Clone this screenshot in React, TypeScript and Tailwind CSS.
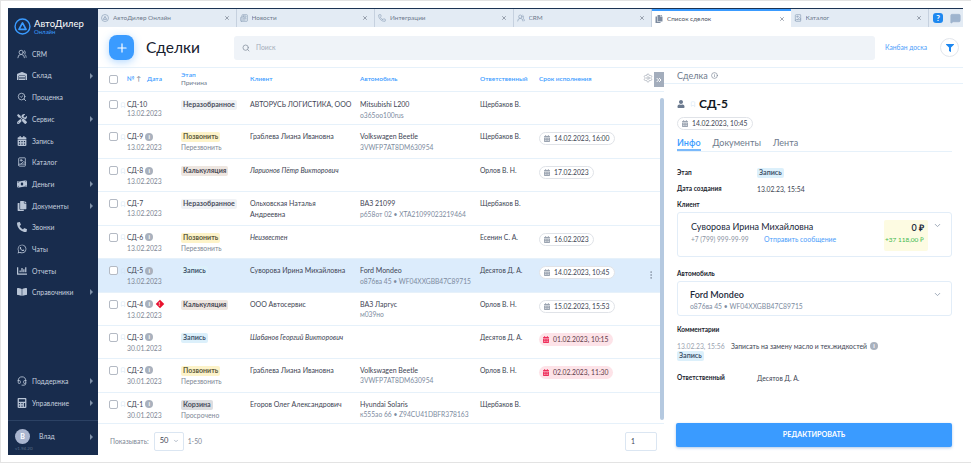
import React from "react";
import { Search, X, ChevronDown, ChevronsRight, EllipsisVertical, Bookmark, Info, Plus, Phone, Newspaper, SearchCheck, BookImage, Headset, UsersRound, MessageSquareMore, Settings } from "lucide-react";
import { FaWhatsapp, FaWarehouse, FaTools, FaCalendarAlt, FaMoneyBillWave, FaCopy, FaPhoneAlt, FaChartBar, FaBookOpen, FaCalculator, FaUser, FaFilter } from "react-icons/fa";

type Tag = "n" | "p" | "k" | "z" | "c";
const tagCls: Record<Tag, string> = {
  n: "bg-[#f0f2f5] text-[#4b5060]",
  p: "bg-[#fdf3c9] text-[#5c5a3a]",
  k: "bg-[#eee6e0] text-[#4a4a55]",
  z: "bg-[#dcf0fb] text-[#44566e]",
  c: "bg-[#dcdde1] text-[#4b5060]",
};
const tagText: Record<Tag, string> = { n: "Неразобранное", p: "Позвонить", k: "Калькуляция", z: "Запись", c: "Корзина" };

function Pill({ t }: { t: Tag }) {
  return <span className={`block w-fit rounded-[2px] px-[2px] h-[10px] leading-[10px] text-[7.1px] font-bold ${tagCls[t]}`}>{tagText[t]}</span>;
}

function I() {
  return <span className="inline-flex items-center justify-center w-[8px] h-[8px] rounded-full bg-[#a9b1bd] text-white text-[6px] font-bold leading-none shrink-0">i</span>;
}

function Box() {
  return <span className="block w-[9px] h-[9px] rounded-[2px] border border-[#b4bac4] bg-white shrink-0" />;
}

type R = {
  id: string; date: string; info?: boolean; alert?: boolean; tag: Tag; reason?: string; client: string; client2?: string; italic?: boolean;
  car?: string; sub?: string; resp: string; due?: string; red?: boolean; active?: boolean; h: string; first?: boolean;
};

const rows: R[] = [
  { id: "СД-10", date: "13.02.2023", tag: "n", client: "АВТОРУСЬ ЛОГИСТИКА, ООО", car: "Mitsubishi L200", sub: "о365оо100rus", resp: "Щербаков В.", h: "h-[33.5px]", first: true },
  { id: "СД-9", date: "13.02.2023", info: true, tag: "p", reason: "Перезвонить", client: "Граблева Лиана Ивановна", car: "Volkswagen Beetle", sub: "3VWFP7AT8DM630954", resp: "Щербаков В.", due: "14.02.2023, 16:00", h: "h-[34px]" },
  { id: "СД-8", date: "13.02.2023", info: true, tag: "k", client: "Ларионов Пётр Викторович", italic: true, resp: "Орлов В. Н.", due: "17.02.2023", h: "h-[33px]" },
  { id: "СД-7", date: "13.02.2023", tag: "n", client: "Ольховская Наталья", client2: "Андреевна", car: "ВАЗ 21099", sub: "р658от 02 • XTA21099023219464", resp: "Щербаков В.", h: "h-[33.5px]" },
  { id: "СД-6", date: "13.02.2023", info: true, tag: "p", reason: "Перезвонить", client: "Неизвестен", italic: true, resp: "Есенин С. А.", due: "16.02.2023", h: "h-[33.5px]" },
  { id: "СД-5", date: "13.02.2023", info: true, tag: "z", client: "Суворова Ирина Михайловна", car: "Ford Mondeo", sub: "о876ва 45 • WF04XXGBB47C89715", resp: "Десятов Д. А.", due: "14.02.2023, 10:45", active: true, h: "h-[33.5px]" },
  { id: "СД-4", date: "13.02.2023", info: true, alert: true, tag: "k", client: "ООО Автосервис", car: "ВАЗ Ларгус", sub: "м039но", resp: "Орлов В. Н.", due: "15.02.2023, 15:53", h: "h-[33px]" },
  { id: "СД-3", date: "30.01.2023", info: true, tag: "z", client: "Шабанов Георгий Викторович", italic: true, resp: "Десятов Д. А.", due: "01.02.2023, 10:15", red: true, h: "h-[33px]" },
  { id: "СД-2", date: "30.01.2023", info: true, tag: "p", reason: "Перезвонить", client: "Граблева Лиана Ивановна", car: "Volkswagen Beetle", sub: "3VWFP7AT8DM630954", resp: "Орлов В. Н.", due: "02.02.2023, 11:30", red: true, h: "h-[34px]" },
  { id: "СД-1", date: "30.01.2023", info: true, tag: "c", reason: "Просрочено", client: "Егоров Олег Александрович", car: "Hyundai Solaris", sub: "к555ао 66 • Z94CU41DBFR378163", resp: "Щербаков В.", h: "h-[31px]" },
];

function Due({ text, red }: { text: string; red?: boolean }) {
  return (
    <span className={`flex w-fit items-center gap-[4px] h-[13px] px-[4px] rounded-full text-[6.8px] whitespace-nowrap ${red ? "bg-[#fde3e8] text-[#5d3a48]" : "border border-[#e0e3e8] text-[#3d4453] bg-white"}`}>
      <FaCalendarAlt className={`w-[6px] h-[7px] ${red ? "text-[#ee2f5b]" : "text-[#9aa3b0]"}`} />
      {text}
    </span>
  );
}

function Row({ r }: { r: R }) {
  return (
    <div className={`relative flex items-start border-b border-[#e6f1fa] pl-[11px] ${r.first ? "pt-[8.5px]" : "pt-[7px]"} ${r.h} ${r.active ? "bg-[#dcecfc]" : "bg-white"}`}>
      <Box />
      <div className="w-[62px] ml-[1px] shrink-0">
        <div className="flex items-center h-[9px] gap-[2px] leading-[9px] text-[6.8px] text-[#3d4453]">
          <Bookmark className="w-[6px] h-[8px] text-[#cfe0f2] shrink-0 -mr-[2px] mx-[1px]" strokeWidth={2} />
          <span className="ml-[1px]">{r.id}</span>
          {r.info && <I />}
          {r.alert && <span className="ml-[2px] w-[6px] h-[6px] rotate-45 bg-[#e8112d] flex items-center justify-center"><span className="-rotate-45 text-white text-[5px] font-bold leading-none">!</span></span>}
        </div>
        <div className={`pl-[8px] ${r.first ? "mt-0" : r.info ? "mt-[2px]" : "mt-[1px]"} text-[6.8px] leading-[9px] text-[#7e8795]`}>{r.date}</div>
      </div>
      <div className="w-[69px] shrink-0">
        <Pill t={r.tag} />
        {r.reason && <div className="text-[6.8px] leading-[10px] text-[#7e8795]">{r.reason}</div>}
      </div>
      <div className={`w-[110px] shrink-0 text-[7px] leading-[11px] -mt-[1px] text-[#3d4453] ${r.italic ? "italic" : ""}`}>
        <div className="whitespace-nowrap">{r.client}</div>
        {r.client2 && <div>{r.client2}</div>}
      </div>
      <div className="w-[120px] shrink-0 -mt-[1px] leading-[10.5px] whitespace-nowrap">
        {r.car && <div className="text-[#3d4453] text-[7px]">{r.car}</div>}
        {r.sub && <div className="text-[#7d8ba0] text-[6.7px]">{r.sub}</div>}
      </div>
      <div className="w-[59px] shrink-0 -mt-[1px] text-[6.8px] leading-[11px] text-[#3d4453]">{r.resp}</div>
      <div>{r.due && <Due text={r.due} red={r.red} />}</div>
      {r.active && <EllipsisVertical className="absolute right-[8px] top-[11px] w-[10px] h-[10px] text-[#8a97a8]" />}
    </div>
  );
}

const nav = [
  { t: "CRM", i: UsersRound },
  { t: "Склад", i: FaWarehouse, a: true },
  { t: "Проценка", i: SearchCheck },
  { t: "Сервис", i: FaTools, a: true },
  { t: "Запись", i: FaCalendarAlt },
  { t: "Каталог", i: BookImage },
  { t: "Деньги", i: FaMoneyBillWave, a: true },
  { t: "Документы", i: FaCopy, a: true },
  { t: "Звонки", i: FaPhoneAlt },
  { t: "Чаты", i: FaWhatsapp },
  { t: "Отчеты", i: FaChartBar },
  { t: "Справочники", i: FaBookOpen, a: true },
];

function NavItem({ t, i: Ic, a }: { t: string; i: React.ElementType; a?: boolean }) {
  return (
    <div className="flex items-center h-[21.7px] pl-[9px] pr-[5px] text-[#c5d0df] text-[6.8px]">
      <Ic className="w-[10px] h-[10px] text-[#b9c5d6] shrink-0" />
      <span className="ml-[5px] flex-1">{t}</span>
      {a && <span className="w-0 h-0 border-y-[3px] border-y-transparent border-l-[3px] border-l-[#7f90a8]" />}
    </div>
  );
}

const tabs = [
  { t: "АвтоДилер Онлайн", i: Logo2 },
  { t: "Новости", i: Newspaper },
  { t: "Интеграции", i: Phone },
  { t: "CRM", i: UsersRound },
  { t: "Список сделок", i: FaCopy, active: true },
  { t: "Каталог", i: BookImage },
];

function Logo2({ className }: { className?: string }) {
  return (
    <svg viewBox="0 0 24 24" className={className} fill="none" stroke="currentColor" strokeWidth="2">
      <circle cx="12" cy="12" r="10.5" />
      <path d="M12 7 L17 16 H7 Z" strokeWidth="2.4" strokeLinejoin="round" />
    </svg>
  );
}

const label = "font-bold text-[#20242e] text-[6.5px]";

export default function App() {
  return (
    <div className="w-[971px] h-[463px] bg-white border-t border-l border-b border-[#e3e3e3] pt-[7px] pl-[7px] pr-[8px] pb-[7px] overflow-hidden font-['Lato','Open_Sans',sans-serif]">
      <div className="flex w-[955px] h-[447px] border-t border-[#1b3353]">
        {/* sidebar */}
        <aside className="w-[90px] shrink-0 bg-[#182c4d] flex flex-col overflow-hidden">
          <div className="flex items-center h-[29px] pl-[6px] mt-[3px]">
            <Logo2 className="w-[17px] h-[17px] text-[#3a9bff]" />
            <div className="ml-[3px]">
              <div className="text-white text-[9.5px] leading-[10px]">АвтоДилер</div>
              <div className="text-[#3a9bff] text-[6px] leading-[6px]">Онлайн</div>
            </div>
          </div>
          <div className="mt-[2px]">
            {nav.map((n) => <NavItem key={n.t} {...n} />)}
          </div>
          <div className="mt-auto">
            <NavItem t="Поддержка" i={Headset} a />
            <NavItem t="Управление" i={FaCalculator} a />
            <div className="border-t border-[#2c4264] h-[35px] mt-[6px] pl-[7px] pr-[5px] pt-[8px]">
              <div className="flex items-center text-[#c5d0df] text-[6.8px]">
                <span className="w-[15px] h-[15px] rounded-full bg-[#a9b5cf] text-white text-[7px] font-bold flex items-center justify-center">B</span>
                <span className="ml-[9px] flex-1">Влад</span>
                <span className="w-0 h-0 border-y-[3px] border-y-transparent border-l-[3px] border-l-[#7f90a8]" />
              </div>
              <div className="text-[#5b6d88] text-[4.5px] leading-[5px] mt-[2px]">v1.94.20</div>
            </div>
          </div>
        </aside>

        {/* main */}
        <div className="flex-1 min-w-0 flex flex-col">
          {/* tabs */}
          <div className="flex h-[18px] bg-[#e3ebf4] shrink-0">
            {tabs.map((t) => (
              <div key={t.t} className={`w-[138.5px] shrink-0 flex items-center pl-[3px] pr-[6px] text-[6.4px] ${t.active ? "bg-white border-t-2 border-[#3a9bff] text-[#4a5261]" : "border-r border-[#c6d1df] text-[#6e7a8c]"}`}>
                <t.i className={`w-[8px] h-[8px] shrink-0 ${t.active ? "text-[#7d8ba0]" : "text-[#8ca0b8]"}`} />
                <span className="ml-[4px] flex-1 truncate">{t.t}</span>
                <X className="w-[6px] h-[6px] text-[#7e8795]" strokeWidth={3} />
              </div>
            ))}
            <div className="flex items-center gap-[6px] pl-[4px]">
              <span className="w-[10px] h-[10px] rounded-[3px] bg-[#1e88f0] text-white text-[8px] font-bold flex items-center justify-center">?</span>
              <MessageSquareMore className="w-[13px] h-[11px] text-[#9fb4ce] fill-[#9fb4ce]" />
            </div>
          </div>

          {/* header */}
          <div className="flex items-center h-[40px] shrink-0 pl-[11px] pr-[4px] pt-[1px]">
            <div className="w-[25px] h-[25px] rounded-[8px] bg-[#3a9bff] shadow-[0_2px_8px_rgba(58,155,255,0.4)] flex items-center justify-center">
              <Plus className="w-[14px] h-[14px] text-white" strokeWidth={2} />
            </div>
            <h1 className="ml-[12px] w-[88px] text-[15.5px] leading-none font-normal text-[#16202e]">Сделки</h1>
            <div className="flex items-center w-[641px] h-[24px] rounded-[3px] bg-[#eff3f8] pl-[8px] text-[6.8px] text-[#a4adba]">
              <Search className="w-[8px] h-[8px] text-[#8e97a5] mr-[6px]" strokeWidth={2.5} />
              Поиск
            </div>
            <span className="ml-[10px] text-[6.7px] text-[#4c9dfa] w-[55px]">Канбан доска</span>
            <span className="w-[19px] h-[19px] rounded-full border border-[#e2e6ec] flex items-center justify-center">
              <FaFilter className="w-[8px] h-[8px] text-[#1e88f0]" />
            </span>
          </div>

          <div className="flex-1 min-h-0 flex">
            {/* table */}
            <div className="w-[566px] shrink-0 flex flex-col relative">
              <div className="flex items-center h-[24.5px] shrink-0 border-y border-[#e6f1fa] pl-[11px] text-[6.5px] font-semibold text-[#3a9bff]">
                <Box />
                <span className="ml-[9px] w-[20px]">№ <span className="text-[#7e8795]">↑</span></span>
                <span className="w-[34px]">Дата</span>
                <div className="w-[69px] leading-[8.5px]">
                  <div>Этап</div>
                  <div className="text-[#6e7a8c] font-normal">Причина</div>
                </div>
                <span className="w-[110px]">Клиент</span>
                <span className="w-[120px]">Автомобиль</span>
                <span className="w-[59px] whitespace-nowrap">Ответственный</span>
                <span>Срок исполнения</span>
              </div>
              <Settings className="absolute left-[545px] top-[6px] w-[10px] h-[10px] text-[#b0b6bf]" />
              <span className="absolute left-[556px] top-[5px] w-[10px] h-[15px] bg-[#a3adbc] flex items-center justify-center">
                <ChevronsRight className="w-[8px] h-[8px] text-white" strokeWidth={3} />
              </span>
              <div className="flex-1 min-h-0 relative">
                {rows.map((r) => <Row key={r.id} r={r} />)}
                <span className="absolute right-0 top-[6px] w-[4px] h-[322px] rounded-full bg-[#b5c9e0]" />
              </div>
              <div className="flex items-center h-[32px] shrink-0 pl-[12px] pr-[7px] pt-[4px] text-[6.8px] text-[#7e8795]">
                <span>Показывать:</span>
                <span className="ml-[5px] flex items-center w-[30px] h-[19px] rounded-[2px] border border-[#dbe6f2] pl-[5px] text-[#3d4453] text-[7.5px]">
                  50 <ChevronDown className="ml-[5px] w-[6px] h-[6px] text-[#9aa5b5]" strokeWidth={3} />
                </span>
                <span className="ml-[4px]">1-50</span>
                <span className="ml-auto flex items-center w-[32px] h-[19px] rounded-[2px] border border-[#dbe6f2] pl-[5px] text-[#3d4453]">1</span>
              </div>
            </div>

            {/* right panel */}
            <div className="flex-1 min-w-0 flex flex-col">
              <div className="flex items-center h-[17px] shrink-0 border-y border-[#e6f1fa] pl-[13px] text-[9px] text-[#6e7a8c]">
                Сделка <Info className="ml-[3px] w-[7px] h-[7px]" />
              </div>
              <div className="pl-[13px] pr-[11px] flex-1 flex flex-col min-h-0">
                <div className="flex items-center mt-[12px] h-[15px]">
                  <FaUser className="w-[8px] h-[8px] text-[#6b7a8f]" />
                  <Bookmark className="ml-[5px] w-[6px] h-[8px] text-[#cfe0f2]" strokeWidth={2} />
                  <span className="ml-[3px] text-[12px] font-bold text-[#14181f]">СД-5</span>
                </div>
                <div className="mt-[6px]"><Due text="14.02.2023, 10:45" /></div>
                <div className="flex items-end gap-[12px] mt-[8px] h-[14px] border-b border-[#e6f1fa] text-[9px] text-[#6e7a8c]">
                  <span className="text-[#3a9bff] font-semibold border-b-2 border-[#7ab9fb] h-[14px] leading-[12px]">Инфо</span>
                  <span className="h-[14px] leading-[12px]">Документы</span>
                  <span className="h-[14px] leading-[12px]">Лента</span>
                </div>
                <div className="flex items-center mt-[16px] h-[10px]">
                  <span className={`w-[80px] ${label}`}>Этап</span>
                  <Pill t="z" />
                </div>
                <div className="flex items-center mt-[6px] h-[10px]">
                  <span className={`w-[80px] ${label}`}>Дата создания</span>
                  <span className="text-[#3d4453] text-[6.8px]">13.02.23, 15:54</span>
                </div>
                <div className={`mt-[6px] h-[10px] leading-[10px] ${label}`}>Клиент</div>
                <div className="relative mt-[2px] h-[45px] w-[275px] rounded-[3px] border border-[#e2edf8] pl-[13px] pt-[8px]">
                  <div className="text-[9px] leading-[12px] text-[#20283a]">Суворова Ирина Михайловна</div>
                  <div className="flex text-[6.6px] mt-[1px] leading-[10px]">
                    <span className="text-[#8a93a1] w-[73px]">+7 (799) 999-99-99</span>
                    <span className="text-[#4c9dfa] text-[6.9px]">Отправить сообщение</span>
                  </div>
                  <div className="absolute right-[23px] top-[7px] w-[44px] h-[31px] rounded-[2px] bg-[#fdfbe2] pr-[4px] pt-[1px] text-right">
                    <div className="text-[9px] leading-[14px] font-semibold text-[#20283a]">0 ₽</div>
                    <div className="text-[6.5px] leading-[9px] text-[#3fb950]">+37 118,00 ₽</div>
                  </div>
                  <ChevronDown className="absolute right-[9px] top-[8px] w-[9px] h-[9px] text-[#9aa5b5]" strokeWidth={2.5} />
                </div>
                <div className={`mt-[12px] h-[10px] leading-[10px] ${label}`}>Автомобиль</div>
                <div className="relative mt-[2px] h-[35px] w-[275px] rounded-[3px] border border-[#e2edf8] pl-[12px] pt-[7px]">
                  <div className="text-[9px] leading-[12px] font-semibold text-[#20283a]">Ford Mondeo</div>
                  <div className="text-[6.8px] leading-[10px] text-[#7d8ba0]">о876ва 45 • WF04XXGBB47C89715</div>
                  <ChevronDown className="absolute right-[9px] top-[8px] w-[9px] h-[9px] text-[#9aa5b5]" strokeWidth={2.5} />
                </div>
                <div className={`mt-[9px] leading-[10px] ${label}`}>Комментарии</div>
                <div className="flex items-center mt-[6px] h-[10px] text-[6.8px]">
                  <span className="text-[#9aa3b0] w-[54px]">13.02.23, 15:56</span>
                  <span className="text-[#3d4453] mr-[3px]">Записать на замену масло и тех.жидкостей</span>
                  <I />
                </div>
                <div className="h-[10px]"><Pill t="z" /></div>
                <div className="flex items-center mt-[12px] h-[10px]">
                  <span className={`w-[80px] ${label}`}>Ответственный</span>
                  <span className="text-[#3d4453] text-[6.8px]">Десятов Д. А.</span>
                </div>
                <div className="mt-auto mb-[8px] h-[24px] w-[276px] -ml-[1px] rounded-[2px] bg-[#3a9bff] shadow-[0_1px_3px_rgba(58,120,200,0.4)] text-white text-[7.2px] font-bold flex items-center justify-center">РЕДАКТИРОВАТЬ</div>
              </div>
            </div>
          </div>
        </div>
      </div>
    </div>
  );
}
